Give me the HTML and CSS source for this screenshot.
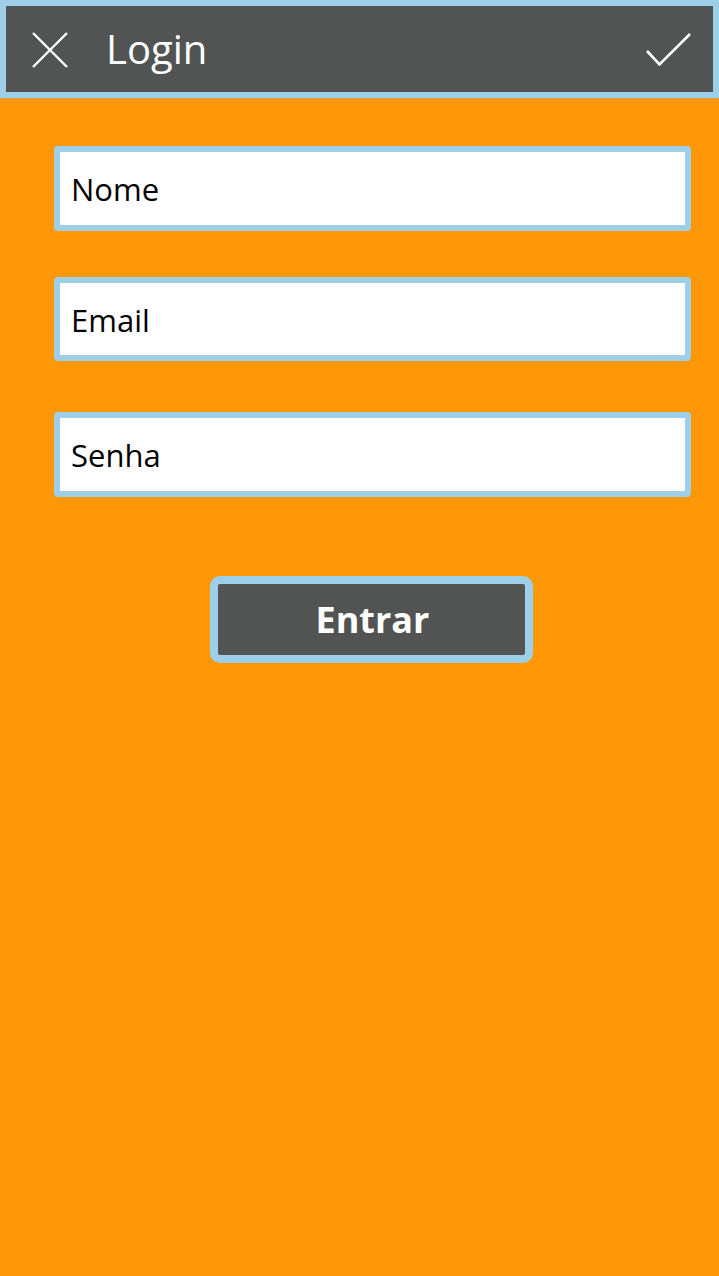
FILE: index.html
```html
<!DOCTYPE html>
<html lang="pt">
<head>
<meta charset="utf-8">
<title>Login</title>
<link rel="stylesheet" href="styles.css">
</head>
<body>
<header class="topbar">
  <button class="icon-btn close" aria-label="Fechar">
    <svg width="36" height="36" viewBox="0 0 36 36"><path d="M1 1 L35 35 M35 1 L1 35" stroke="#fff" stroke-width="2.4" fill="none"/></svg>
  </button>
  <h1 class="title">Login</h1>
  <button class="icon-btn check" aria-label="Confirmar">
    <svg width="46" height="34" viewBox="0 0 46 34"><path d="M1 18 L13.5 31.5 L44 1" stroke="#fff" stroke-width="2.6" fill="none"/></svg>
  </button>
</header>
<main class="form">
  <div class="field f-nome"><span class="label">Nome</span></div>
  <div class="field f-email"><span class="label">Email</span></div>
  <div class="field f-senha"><span class="label">Senha</span></div>
  <div class="actions">
    <button class="submit">Entrar</button>
  </div>
</main>
</body>
</html>
```
FILE: styles.css
```css
* { box-sizing: border-box; }
html, body { margin: 0; padding: 0; }
body {
  width: 719px;
  min-height: 1276px;
  background: #ff9808;
  font-family: "Open Sans", "Noto Sans", sans-serif;
}
.topbar {
  height: 98px;
  background: #525453;
  border: 6px solid #9dcfe9;
  display: flex;
  align-items: center;
  padding: 0 21px 0 26px;
  box-shadow: 0 1px 0 #d9a050;
}
.icon-btn {
  background: none;
  border: 0;
  padding: 0;
  display: flex;
  align-items: center;
  justify-content: center;
}
.close { width: 36px; height: 36px; margin-top: 1px; }
.title {
  margin: 0 0 0 38px;
  color: #fff;
  font-weight: 400;
  font-size: 40px;
  line-height: 1;
  flex: 1;
  position: relative;
  top: 0;
}
.check { width: 46px; height: 34px; margin-top: 2px; }
.form {
  padding: 48px 28px 0 54px;
  display: flex;
  flex-direction: column;
}
.field {
  height: 85px;
  background: #fff;
  border: 6px solid #9dcfe9;
  border-radius: 4px;
  display: flex;
  align-items: center;
  padding-left: 11px;
}
.f-email { margin-top: 46px; height: 84px; }
.f-senha { margin-top: 51px; }
.label {
  font-size: 31px;
  color: #000;
  line-height: 1;
  position: relative;
  top: 1px;
}
.actions {
  display: flex;
  justify-content: center;
  margin-top: 79px;
  padding-right: 2px;
}
.submit {
  width: 323px;
  height: 87px;
  background: #525453;
  border: 8px solid #9dcfe9;
  border-radius: 10px;
  color: #fff;
  font-family: "Open Sans", "Noto Sans", sans-serif;
  font-weight: 700;
  font-size: 36px;
  line-height: 1;
  padding: 0 0 0 2px;
}
```
